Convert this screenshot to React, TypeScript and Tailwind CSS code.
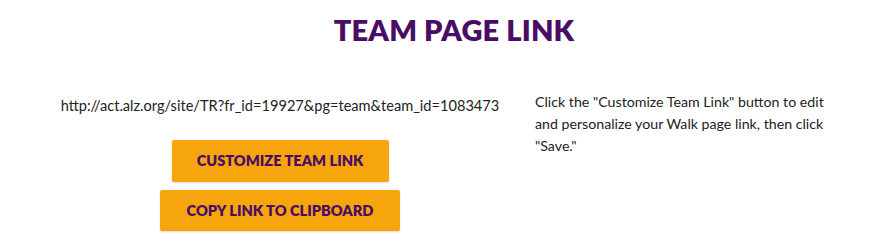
import React from 'react'

export default function App() {
  return (
    <div className="w-[880px] h-[245px] bg-white font-['Lato','Liberation_Sans',sans-serif] overflow-hidden">
      <h1 className="pt-[12px] text-center text-[29px] leading-[36px] font-extrabold text-[#4a0d66] tracking-[0.2px] pl-[28px]">
        TEAM PAGE LINK
      </h1>
      <div className="flex mt-[48px]">
        <div className="w-[520px] flex flex-col items-center pl-[40px]">
          <p className="text-[14.6px] leading-[20px] text-[#222]">
            http://act.alz.org/site/TR?fr_id=19927&amp;pg=team&amp;team_id=1083473
          </p>
          <button className="mt-[24px] w-[217px] h-[42px] bg-[#f6a50c] rounded-[2px] shadow-[0_1px_2px_rgba(0,0,0,0.15)] text-[14.6px] font-extrabold text-[#4a0d66]">
            CUSTOMIZE TEAM LINK
          </button>
          <button className="mt-[8px] w-[240px] h-[41px] bg-[#f6a50c] rounded-[2px] shadow-[0_1px_2px_rgba(0,0,0,0.15)] text-[14.6px] font-extrabold text-[#4a0d66]">
            COPY LINK TO CLIPBOARD
          </button>
        </div>
        <div className="w-[315px] ml-[15px] -mt-[5px]">
          <p className="text-[14.2px] leading-[22px] text-[#222]">
            Click the "Customize Team Link" button to edit and personalize your Walk page link, then click "Save."
          </p>
        </div>
      </div>
    </div>
  )
}
